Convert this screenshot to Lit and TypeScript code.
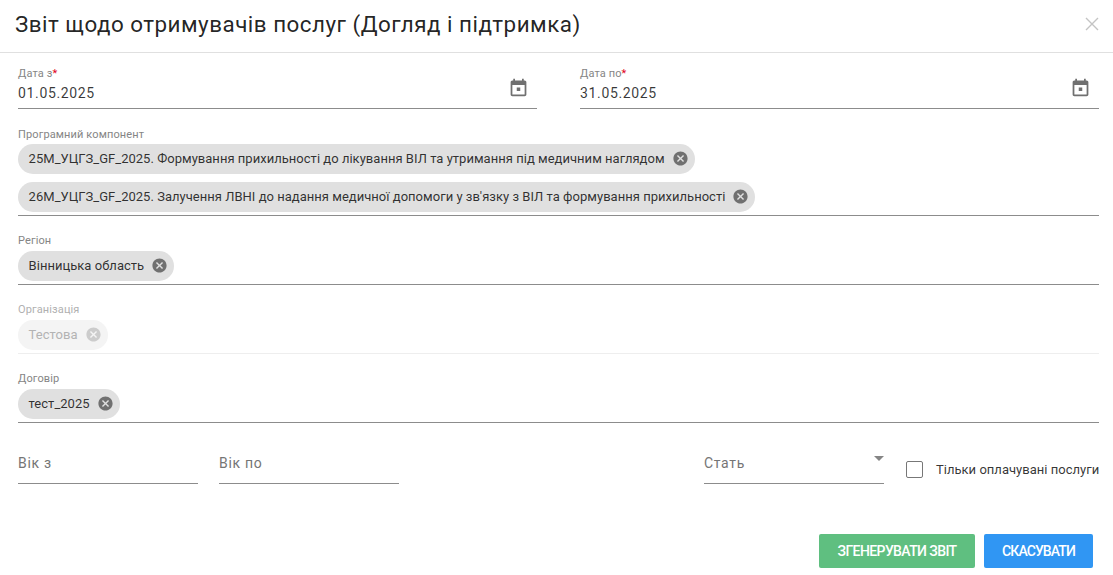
import { LitElement, html, css, svg } from "lit";
import { customElement } from "lit/decorators.js";

const calIcon = svg`<path d="M19 4h-1V2h-2v2H8V2H6v2H5c-1.1 0-2 .9-2 2v14c0 1.1.9 2 2 2h14c1.1 0 2-.9 2-2V6c0-1.1-.9-2-2-2zm0 16H5V9h14v11zM10 12h4v4h-4z"/>`;
const xIcon = svg`<path d="M12 2C6.47 2 2 6.47 2 12s4.47 10 10 10 10-4.47 10-10S17.53 2 12 2zm5 13.59L15.59 17 12 13.41 8.41 17 7 15.59 10.59 12 7 8.41 8.41 7 12 10.59 15.59 7 17 8.41 13.41 12 17 15.59z"/>`;

@customElement("app-root")
export class AppRoot extends LitElement {
  static styles = css`
    :host { display: block; width: 1113px; height: 575px; background: #fff; overflow: hidden;
      font-family: Roboto, "Liberation Sans", sans-serif; color: rgba(0,0,0,.87); }
    .head { height: 52px; border-bottom: 1px solid #e0e0e0; display: flex; align-items: center; justify-content: space-between; padding: 0 14px 0 15px; }
    .title { font-size: 22.4px; font-weight: 400; letter-spacing: .5px; color: rgba(0,0,0,.87); margin: 0 0 5px; line-height: 30px; }
    .close { width: 14px; height: 14px; margin: 0 0 5px; display: block; }
    .body { padding: 14px 14px 0 18px; display: flex; flex-direction: column; }
    .dates { display: grid; grid-template-columns: 519px 519px; column-gap: 43px; }
    .date { height: 41px; border-bottom: 1px solid #8c8c8c; position: relative; display: flex; flex-direction: column; }
    .lab { font-size: 11px; line-height: 13px; color: #858585; letter-spacing: .12px; }
    .lab i { color: #e0001b; font-style: normal; }
    .val { font-size: 14px; line-height: 16px; margin-top: 5px; letter-spacing: .65px; color: rgba(0,0,0,.78); }
    .cal { position: absolute; right: 8px; top: 10px; width: 21px; height: 21px; fill: #707070; }
    .multi { border-bottom: 1px solid #8c8c8c; display: flex; flex-direction: column; align-items: flex-start; }
    .multi.p { margin-top: 19px; height: 87px; }
    .multi.s { margin-top: 18px; height: 50px; }
    .multi.s .chip { margin-top: 4px; }
    .multi.d { border-bottom-color: #eee; color: #bbb; }
    .multi.d .lab { color: #b0b0b0; }
    .chip { height: 30px; box-sizing: border-box; padding: 0 6px 1px 10.6px; margin-top: 3px; border-radius: 15px; background: #e0e0e0; display: inline-flex; align-items: center; font-size: 13px; color: rgba(0,0,0,.8); letter-spacing: .025px; white-space: nowrap; flex: none; }
    .chip + .chip { margin-top: 8px; }
    .chip svg { width: 17px; height: 17px; margin-left: 7px; fill: #707070; flex: none; }
    .multi.d .chip { background: #f4f4f4; color: #b3b3b3; }
    .multi.d .chip svg { fill: #ccc; }
    .row { display: flex; height: 61px; align-items: flex-end; }
    .inp { width: 180px; height: 42px; flex: none; box-sizing: border-box; border-bottom: 1px solid #8c8c8c; font-size: 14px; letter-spacing: .68px; color: #757575; line-height: 16px; padding-top: 13px; position: relative; }
    .gap1 { margin-left: 21px; }
    .sel { margin-left: 305px; }
    .arrow { position: absolute; right: 0; top: 14px; width: 0; height: 0; border-left: 5px solid transparent; border-right: 5px solid transparent; border-top: 5px solid #858585; }
    .check { display: flex; align-items: center; flex: none; margin-left: 22px; height: 16px; margin-bottom: 7px; font-size: 13px; letter-spacing: .02px; color: rgba(0,0,0,.8); white-space: nowrap; }
    .box { width: 15px; height: 15px; border: 1px solid #777; border-radius: 2px; margin-right: 13px; flex: none; }
    .actions { display: flex; justify-content: flex-end; gap: 9px; margin: 50px 6px 0 0; }
    .btn { height: 34px; border-radius: 2px; border: 0; color: #fff; font: 500 14px/34px Roboto, sans-serif; text-transform: uppercase; padding: 0; text-align: center; }
    .g { width: 156px; background: #5fbf80; letter-spacing: -.6px; }
    .b { width: 109px; background: #3096f3; letter-spacing: -.9px; }
  `;

  chip(t: string) {
    return html`<span class="chip">${t}<svg viewBox="0 0 24 24">${xIcon}</svg></span>`;
  }

  render() {
    return html`
      <div class="head">
        <h2 class="title">Звіт щодо отримувачів послуг (Догляд і підтримка)</h2>
        <svg class="close" viewBox="0 0 14 14"><path d="M1 1l12 12M13 1L1 13" stroke="#c4c4c4" stroke-width="1.4" fill="none"/></svg>
      </div>
      <div class="body">
        <div class="dates">
          <div class="date"><span class="lab">Дата з<i>*</i></span><span class="val">01.05.2025</span><svg class="cal" viewBox="0 0 24 24">${calIcon}</svg></div>
          <div class="date"><span class="lab">Дата по<i>*</i></span><span class="val">31.05.2025</span><svg class="cal" viewBox="0 0 24 24">${calIcon}</svg></div>
        </div>
        <div class="multi p"><span class="lab">Програмний компонент</span>
          ${this.chip("25M_УЦГЗ_GF_2025. Формування прихильності до лікування ВІЛ та утримання під медичним наглядом")}
          ${this.chip("26M_УЦГЗ_GF_2025. Залучення ЛВНІ до надання медичної допомоги у зв'язку з ВІЛ та формування прихильності")}
        </div>
        <div class="multi s"><span class="lab">Регіон</span>${this.chip("Вінницька область")}</div>
        <div class="multi s d"><span class="lab">Організація</span>${this.chip("Тестова")}</div>
        <div class="multi s"><span class="lab">Договір</span>${this.chip("тест_2025")}</div>
        <div class="row">
          <div class="inp">Вік з</div>
          <div class="inp gap1">Вік по</div>
          <div class="inp sel">Стать<span class="arrow"></span></div>
          <div class="check"><span class="box"></span>Тільки оплачувані послуги</div>
        </div>
        <div class="actions">
          <button class="btn g">Згенерувати звіт</button>
          <button class="btn b">Скасувати</button>
        </div>
      </div>
    `;
  }
}
